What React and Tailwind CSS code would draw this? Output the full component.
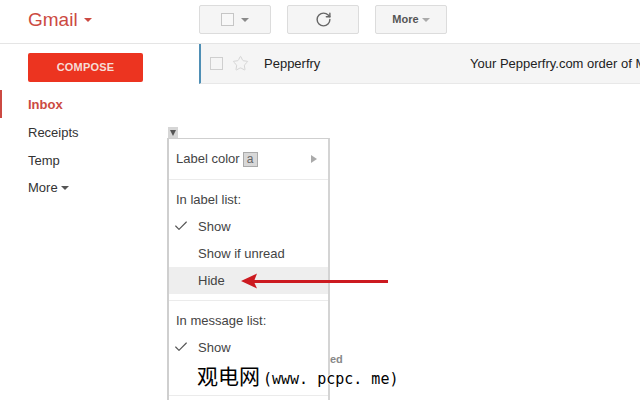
import React from 'react';
import { Check, RotateCw, Star } from 'lucide-react';

function Caret({ className }) {
    return <span className={`inline-block w-0 h-0 border-x-[4px] border-x-transparent border-t-[4px] ${className}`} />;
}

function ToolButton({ children, className = '' }) {
    return (
        <div className={`h-[29px] w-[72px] flex items-center justify-center rounded-[2px] border border-[#dcdcdc] bg-[#f5f5f5] ${className}`}>
            {children}
        </div>
    );
}

function MenuItem({ checked, active, children }) {
    return (
        <div className={`h-[27px] flex items-center relative pl-[29px] text-[13px] text-[#444] ${active ? 'bg-[#eeeeee]' : ''}`}>
            {checked && <Check className="absolute left-[4px] top-[5px] w-[16px] h-[16px] text-[#555]" strokeWidth={1.75} />}
            {children}
        </div>
    );
}

export default function App() {
    return (
        <div className="relative w-[640px] h-[400px] overflow-hidden bg-white font-['Liberation_Sans',Arial,sans-serif]">
            {/* HEADER */}
            <header className="h-[44px] flex border-b border-[#e5e5e5]">
                <div className="w-[199px] pl-[28px] pt-[8px] flex items-start">
                    <span className="text-[19px] leading-[24px] text-[#cc4a42]">Gmail</span>
                    <Caret className="ml-[6px] mt-[10px] border-t-[#cc4a42]" />
                </div>
                <div className="flex gap-[16px] pt-[5px]">
                    <ToolButton>
                        <span className="w-[13px] h-[13px] border border-[#c6c6c6] bg-[#f8f8f8]" />
                        <Caret className="ml-[7px] border-t-[#8a8a8a]" />
                    </ToolButton>
                    <ToolButton>
                        <RotateCw className="w-[17px] h-[17px] text-[#666]" strokeWidth={2} />
                    </ToolButton>
                    <ToolButton>
                        <span className="text-[11px] font-bold text-[#555]">More</span>
                        <Caret className="ml-[3px] border-t-[#aaaaaa]" />
                    </ToolButton>
                </div>
            </header>

            <div className="flex">
                {/* SIDEBAR */}
                <aside className="w-[199px] pt-[9px]">
                    <div className="ml-[28px] w-[115px] h-[29px] flex items-center justify-center rounded-[2px] bg-[#ec3420] text-[11px] font-bold tracking-[0.2px] text-[#f6dcd6]">
                        COMPOSE
                    </div>
                    <nav className="mt-[8px] text-[13px] text-[#333]">
                        <div className="h-[28px] pl-[26px] pt-[2px] flex items-center font-bold text-[#cc4a42] border-l-2 border-[#cc4a42]">Inbox</div>
                        <div className="h-[28px] mt-[1px] pl-[28px] flex items-center">Receipts</div>
                        <div className="h-[28px] pl-[28px] flex items-center">Temp</div>
                        <div className="h-[26px] pl-[28px] flex items-center">
                            More
                            <Caret className="ml-[3px] border-t-[#555]" />
                        </div>
                    </nav>
                </aside>

                {/* MAIN */}
                <main className="flex-1 min-w-0">
                    <div className="h-[40px] flex items-center border-l-2 border-l-[#4f8fb5] border-b border-b-[#e8e8e8] bg-[#f5f5f5] text-[13px] text-[#222] whitespace-nowrap overflow-hidden">
                        <span className="shrink-0 ml-[9px] w-[13px] h-[13px] border border-[#cfcfcf]" />
                        <Star className="shrink-0 ml-[9px] w-[17px] h-[17px] text-[#d0d0d0]" strokeWidth={1.25} />
                        <span className="shrink-0 ml-[15px] w-[206px]">Pepperfry</span>
                        <span className="shrink-0">Your Pepperfry.com order of M</span>
                    </div>
                </main>
            </div>

            {/* LABEL DROPDOWN */}
            <span className="absolute left-[330px] top-[351px] text-[11px] font-bold text-[#888]">ed</span>
            <div className="absolute left-[168px] top-[127px] w-[10px] h-[11px] bg-[#d6d6d6] flex items-center justify-center">
                <span className="inline-block w-0 h-0 border-x-[3px] border-x-transparent border-t-[6px] border-t-[#555]" />
            </div>
            <div className="absolute left-[167px] top-[138px] w-[163px] h-[280px] bg-white border-2 border-[#cfcfcf] border-r-[#d4d4d4] border-t-[1px]">
                <div className="h-[41px] flex items-center pl-[7px] pr-[11px] text-[13px] text-[#444] border-b border-[#ebebeb]">
                    Label color
                    <span className="ml-[3px] w-[15px] h-[15px] flex items-center justify-center border border-[#aaaaaa] bg-[#d8d8d8] text-[12px] text-[#666]">a</span>
                    <span className="ml-auto w-0 h-0 border-y-[4px] border-y-transparent border-l-[6px] border-l-[#aaaaaa]" />
                </div>
                <div className="h-[33px] pl-[7px] pt-[6px] flex items-center text-[13px] text-[#444]">In label list:</div>
                <MenuItem checked>Show</MenuItem>
                <MenuItem>Show if unread</MenuItem>
                <MenuItem active>Hide</MenuItem>
                <div className="mt-[6px] h-[34px] pl-[7px] pt-[7px] flex items-center border-t border-[#ebebeb] text-[13px] text-[#444]">In message list:</div>
                <MenuItem checked>Show</MenuItem>
                <div className="mt-[34px] border-t border-[#ebebeb]" />
            </div>

            {/* ANNOTATIONS */}
            <svg className="absolute left-[240px] top-[270px]" width="150" height="22" viewBox="0 0 150 22">
                <path d="M1 11 L17 3.5 L14.5 10 L148 10 L148 13 L14.5 13 L17 18.5 Z" fill="#cc1a20" />
            </svg>
            <span className="absolute left-[197px] top-[362px] whitespace-nowrap text-[21px] leading-[26px] text-black [text-shadow:1px_0_0_#fff,-1px_0_0_#fff,0_1px_0_#fff,0_-1px_0_#fff] font-['Noto_Sans_CJK_SC',sans-serif]">
                观电网<span className="ml-[3px] font-['DejaVu_Sans_Mono',monospace] text-[15px]">(www. pcpc. me)</span>
            </span>
        </div>
    );
}
